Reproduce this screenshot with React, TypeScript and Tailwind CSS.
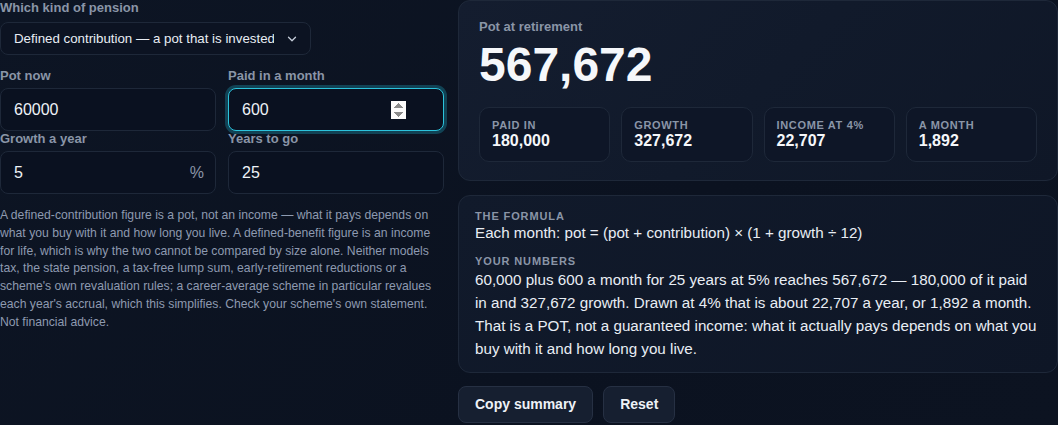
import React, { useState } from 'react';

const fmt = (n: number) => Math.round(n).toLocaleString('en-GB');

type Field = {
  key: 'pot' | 'monthly' | 'growth' | 'years';
  label: string;
  suffix?: string;
};

const fields: Field[] = [
  { key: 'pot', label: 'Pot now' },
  { key: 'monthly', label: 'Paid in a month' },
  { key: 'growth', label: 'Growth a year', suffix: '%' },
  { key: 'years', label: 'Years to go' },
];

const defaults = { pot: '60000', monthly: '600', growth: '5', years: '25' };

const App: React.FC = () => {
  const [values, setValues] = useState(defaults);
  const [kind, setKind] = useState('dc');

  const pot0 = Number(values.pot) || 0;
  const monthly = Number(values.monthly) || 0;
  const growth = Number(values.growth) || 0;
  const years = Number(values.years) || 0;

  // monthly compounding, contribution added before growth
  let pot = pot0;
  for (let i = 0; i < years * 12; i++) {
    pot = (pot + monthly) * (1 + growth / 100 / 12);
  }
  const paidIn = monthly * 12 * years;
  const gains = pot - pot0 - paidIn;
  const income = pot * 0.04;
  const perMonth = income / 12;

  const stats = [
    { label: 'Paid in', value: fmt(paidIn) },
    { label: 'Growth', value: fmt(gains) },
    { label: 'Income at 4%', value: fmt(income) },
    { label: 'A month', value: fmt(perMonth) },
  ];

  return (
    <div className="min-h-[425px] w-[1058px] bg-[linear-gradient(135deg,#0d1524,#0b1220_60%,#0c1321)] font-['Liberation_Sans',Arial,sans-serif] text-[#e8edf4]">
      <div className="grid grid-cols-[444px_1fr] gap-[14px]">
        {/* Inputs */}
        <div>
          <div className="text-[13px] font-bold leading-[16px] text-[#8a95a7]">Which kind of pension</div>
          <div className="relative mt-[6px] w-[311px]">
            <select
              value={kind}
              onChange={(e) => setKind(e.target.value)}
              className="h-[33px] w-full appearance-none rounded-[8px] border border-[#1e2839] bg-[#0c1322] pl-[13px] pr-[36px] text-[13.3px] text-[#e8edf4] outline-none"
            >
              <option value="dc">Defined contribution — a pot that is invested</option>
              <option value="db">Defined benefit — an income for life</option>
            </select>
            <svg className="pointer-events-none absolute right-[14px] top-[12px] h-[10px] w-[10px]" viewBox="0 0 10 10" fill="none">
              <path d="M1.5 3.2 5 6.7 8.5 3.2" stroke="#c7cfdb" strokeWidth="1.3" strokeLinecap="round" strokeLinejoin="round" />
            </svg>
          </div>

          <div className="mt-[13px] grid grid-cols-2 gap-x-[12px]">
            {fields.map((f) => (
              <label key={f.key} className="block">
                <div className="text-[13px] font-bold leading-[16px] text-[#8a95a7]">{f.label}</div>
                <div className="relative mt-[4px]">
                  <input
                    type="number"
                    autoFocus={f.key === 'monthly'}
                    value={values[f.key]}
                    onChange={(e) => setValues({ ...values, [f.key]: e.target.value })}
                    className={`h-[43px] w-full rounded-[8px] border bg-[#0a1120] pl-[13px] pr-[37px] text-[16px] text-[#eef2f7] outline-none ${
                      f.key === 'monthly'
                        ? 'border-[#2cc3dc] shadow-[0_0_0_3px_rgba(34,190,220,0.28)]'
                        : 'border-[#1e2839] [&::-webkit-inner-spin-button]:appearance-none'
                    }`}
                  />
                  {f.suffix && (
                    <span className="pointer-events-none absolute right-[12px] top-[13px] text-[16px] leading-[18px] text-[#8a95a7]">
                      {f.suffix}
                    </span>
                  )}
                </div>
              </label>
            ))}
          </div>

          <p className="mt-[13px] text-[12.2px] leading-[17.75px] text-[#8e9ab0]">
            A defined-contribution figure is a pot, not an income — what it pays depends on what you buy with it and how
            long you live. A defined-benefit figure is an income for life, which is why the two cannot be compared by size
            alone. Neither models tax, the state pension, a tax-free lump sum, early-retirement reductions or a scheme's own
            revaluation rules; a career-average scheme in particular revalues each year's accrual, which this simplifies.
            Check your scheme's own statement. Not financial advice.
          </p>
        </div>

        {/* Results */}
        <div>
          <div className="rounded-[12px] border border-[#1e2839] bg-[linear-gradient(135deg,#141d2f,#111a2b_50%,#0f1727)] px-[20px] pt-[18px] pb-[18px]">
            <div className="text-[13px] font-bold leading-[16px] text-[#8a95a7]">Pot at retirement</div>
            <div className="mt-[6px] text-[48px] font-bold leading-none text-[#f5f7fa]">{fmt(pot)}</div>
            <div className="mt-[18px] grid grid-cols-4 gap-[11px]">
              {stats.map((s) => (
                <div key={s.label} className="rounded-[10px] border border-[#1e2839] bg-[#0e1627] px-[12px] pt-[10px] pb-[11px]">
                  <div className="text-[11px] font-bold uppercase leading-[14px] tracking-[0.06em] text-[#8a95a7]">{s.label}</div>
                  <div className="text-[16px] font-bold leading-[18px] text-[#f5f7fa]">{s.value}</div>
                </div>
              ))}
            </div>
          </div>

          <div className="mt-[14px] rounded-[12px] border border-[#1e2839] bg-[linear-gradient(135deg,#111a2b,#0e1626)] px-[16px] pt-[13px] pb-[12px]">
            <div className="text-[11px] font-bold uppercase leading-[14px] tracking-[0.08em] text-[#8a95a7]">The formula</div>
            <div className="text-[15.2px] leading-[20px] text-[#e8edf4]">Each month: pot = (pot + contribution) × (1 + growth ÷ 12)</div>
            <div className="mt-[11px] text-[11px] font-bold uppercase leading-[14px] tracking-[0.08em] text-[#8a95a7]">Your numbers</div>
            <p className="text-[15.2px] leading-[23px] text-[#e8edf4]">
              {fmt(pot0)} plus {fmt(monthly)} a month for {years} years at {growth}% reaches {fmt(pot)} — {fmt(paidIn)} of it
              paid in and {fmt(gains)} growth. Drawn at 4% that is about {fmt(income)} a year, or {fmt(perMonth)} a month.
              That is a POT, not a guaranteed income: what it actually pays depends on what you buy with it and how long you
              live.
            </p>
          </div>

          <div className="mt-[13px] flex gap-[10px]">
            <button className="rounded-[8px] border border-[#263043] bg-[#161f30] px-[16px] py-[8px] text-[14px] font-bold leading-[19px] text-[#eef2f7]">
              Copy summary
            </button>
            <button
              onClick={() => setValues(defaults)}
              className="rounded-[8px] border border-[#263043] bg-[#161f30] px-[16px] py-[8px] text-[14px] font-bold leading-[19px] text-[#eef2f7]"
            >
              Reset
            </button>
          </div>
        </div>
      </div>
    </div>
  );
};

export default App;
